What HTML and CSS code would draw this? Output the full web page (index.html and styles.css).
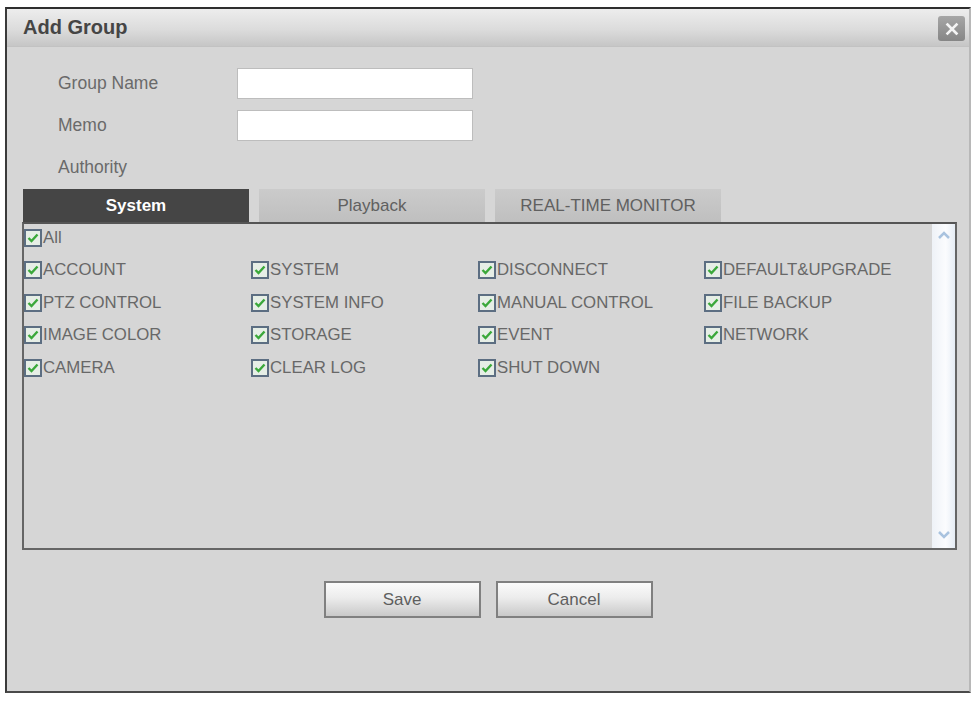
FILE: index.html
```html
<!DOCTYPE html>
<html>
<head>
<meta charset="utf-8">
<title>Add Group</title>
<link rel="stylesheet" href="styles.css">
</head>
<body>
<div class="dialog">
  <div class="titlebar">
    <span class="title">Add Group</span>
    <span class="close">
      <svg width="14" height="14" viewBox="0 0 14 14"><path d="M2.5 2.5 L11.5 11.5 M11.5 2.5 L2.5 11.5" stroke="#f4f4f4" stroke-width="2.6" stroke-linecap="square"/></svg>
    </span>
  </div>
  <div class="form">
    <label class="lbl">Group Name</label><input class="txt" type="text">
    <label class="lbl">Memo</label><input class="txt" type="text">
    <label class="lbl">Authority</label><span></span>
  </div>
  <div class="tabs">
    <div class="tab active">System</div>
    <div class="tab">Playback</div>
    <div class="tab">REAL-TIME MONITOR</div>
  </div>
  <div class="panel">
    <div class="list">
      <div class="row"><span class="item"><span class="cb"></span>All</span></div>
      <div class="row grid">
        <span class="item"><span class="cb"></span>ACCOUNT</span>
        <span class="item"><span class="cb"></span>SYSTEM</span>
        <span class="item"><span class="cb"></span>DISCONNECT</span>
        <span class="item"><span class="cb"></span>DEFAULT&amp;UPGRADE</span>
      </div>
      <div class="row grid">
        <span class="item"><span class="cb"></span>PTZ CONTROL</span>
        <span class="item"><span class="cb"></span>SYSTEM INFO</span>
        <span class="item"><span class="cb"></span>MANUAL CONTROL</span>
        <span class="item"><span class="cb"></span>FILE BACKUP</span>
      </div>
      <div class="row grid">
        <span class="item"><span class="cb"></span>IMAGE COLOR</span>
        <span class="item"><span class="cb"></span>STORAGE</span>
        <span class="item"><span class="cb"></span>EVENT</span>
        <span class="item"><span class="cb"></span>NETWORK</span>
      </div>
      <div class="row grid">
        <span class="item"><span class="cb"></span>CAMERA</span>
        <span class="item"><span class="cb"></span>CLEAR LOG</span>
        <span class="item"><span class="cb"></span>SHUT DOWN</span>
      </div>
    </div>
    <div class="scroll">
      <svg width="14" height="10" viewBox="0 0 14 10"><path d="M2 8 L7 3 L12 8" fill="none" stroke="#a9c3df" stroke-width="2.5"/></svg>
      <svg width="14" height="10" viewBox="0 0 14 10"><path d="M2 2 L7 7 L12 2" fill="none" stroke="#a9c3df" stroke-width="2.5"/></svg>
    </div>
  </div>
  <div class="buttons">
    <button class="btn">Save</button>
    <button class="btn">Cancel</button>
  </div>
</div>
</body>
</html>
```
FILE: styles.css
```css
html, body {
  margin: 0;
  padding: 0;
  background: #ffffff;
}
body {
  padding: 7px 0 0 5px;
  font-family: "Liberation Sans", Arial, sans-serif;
}
.dialog {
  box-sizing: border-box;
  width: 966px;
  height: 686px;
  background: #d6d6d6;
  border-top: 2px solid #2e2e2e;
  border-left: 2px solid #3a3a3a;
  border-bottom: 2px solid #4a4a4a;
  border-right: 2px solid #b8b8b8;
  display: flex;
  flex-direction: column;
}
.titlebar {
  height: 38px;
  flex: none;
  display: flex;
  align-items: center;
  justify-content: space-between;
  padding: 0 4px 0 16px;
  background: linear-gradient(#ededed 0%, #dcdcdc 55%, #c6c6c6 100%);
  border-bottom: 1px solid #c2c2c2;
  box-sizing: border-box;
}
.title {
  font-size: 20px;
  font-weight: bold;
  color: #454545;
}
.close {
  width: 27px;
  height: 25px;
  margin-top: 2px;
  border-radius: 3px;
  background: linear-gradient(#a6a6a6, #868686);
  display: flex;
  align-items: center;
  justify-content: center;
}
.form {
  display: grid;
  grid-template-columns: 179px 236px;
  grid-auto-rows: 31px;
  row-gap: 11px;
  padding: 21px 0 0 51px;
}
.lbl {
  font-size: 17.5px;
  color: #6a6a6a;
  display: flex;
  align-items: center;
}
.txt {
  box-sizing: border-box;
  width: 236px;
  height: 31px;
  margin: 0;
  border: 1px solid #bdbdbd;
  background: #fff;
}
.tabs {
  display: flex;
  gap: 10px;
  margin: 6px 0 0 16px;
  height: 33px;
}
.tab {
  width: 226px;
  display: flex;
  align-items: center;
  justify-content: center;
  font-size: 17px;
  color: #606060;
  background: linear-gradient(#cbcbcb, #bfbfbf);
}
.tab.active {
  background: #454545;
  color: #fff;
  font-weight: bold;
}
.panel {
  box-sizing: border-box;
  margin-left: 15px;
  width: 935px;
  height: 328px;
  border: 2px solid #666;
  border-top-color: #555;
  display: flex;
}
.list {
  flex: 1;
  display: flex;
  flex-direction: column;
  gap: 12.5px;
  padding-top: 3.5px;
  padding-left: 0;
}
.row {
  height: 20px;
  display: flex;
  align-items: center;
}
.row.grid {
  display: grid;
  grid-template-columns: 227px 227px 226px auto;
}
.item {
  display: flex;
  align-items: center;
  font-size: 16.8px;
  color: #686868;
  white-space: nowrap;
}
.cb {
  box-sizing: border-box;
  width: 18px;
  height: 18px;
  flex: none;
  border: 2px solid #5c6e82;
  background: #e6eee6 url("data:image/svg+xml,%3Csvg xmlns='http://www.w3.org/2000/svg' width='14' height='14' viewBox='0 0 14 14'%3E%3Cpath d='M2.5 7 L5.5 10 L11.5 3.5' fill='none' stroke='%233aa83a' stroke-width='2.4'/%3E%3C/svg%3E") center/14px 14px no-repeat;
  margin-right: 1px;
}
.scroll {
  width: 23px;
  flex: none;
  background: linear-gradient(90deg, #eef2f7, #fbfcfe 60%, #e6edf5);
  display: flex;
  flex-direction: column;
  justify-content: space-between;
  align-items: center;
  padding: 6px 0 8px;
  box-sizing: border-box;
}
.buttons {
  display: flex;
  justify-content: center;
  gap: 15px;
  margin-top: 31px;
}
.btn {
  box-sizing: border-box;
  width: 157px;
  height: 37px;
  margin: 0;
  border: 2px solid #808080;
  background: linear-gradient(#fbfbfb 0%, #ececec 45%, #c9c9c9 100%);
  font-family: "Liberation Sans", Arial, sans-serif;
  font-size: 17px;
  color: #5e5e5e;
}
```
